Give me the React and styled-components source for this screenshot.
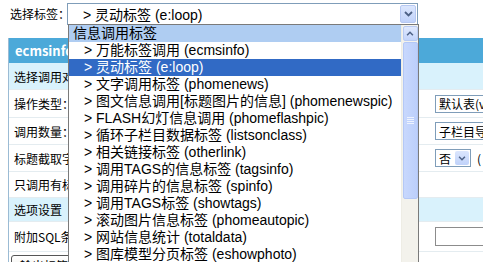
import React from "react";
import styled, { createGlobalStyle } from "styled-components";

const GlobalStyle = createGlobalStyle`
  html, body {
    margin: 0;
    padding: 0;
    background: #ffffff;
    overflow: hidden;
  }
  body {
    font-family: "Noto Sans CJK SC", "Liberation Sans", sans-serif;
    color: #000;
  }
`;

const Page = styled.div`
  position: relative;
  width: 483px;
  height: 262px;
  overflow: hidden;
`;

/* ---------- top bar ---------- */
const TopBar = styled.div`
  display: flex;
  align-items: center;
  height: 25px;
  padding-left: 10px;
  padding-top: 1px;
`;

const TopLabel = styled.span`
  font-size: 12px;
  width: 57px;
  flex-shrink: 0;
  white-space: nowrap;
`;

const SelectBox = styled.div`
  box-sizing: border-box;
  flex-shrink: 0;
  width: 351px;
  height: 22px;
  border: 1px solid #7f9db9;
  background: #fff;
  display: flex;
  align-items: center;
  justify-content: space-between;
  padding-left: 15px;
  font-family: "Liberation Sans", "Noto Sans CJK SC", sans-serif;
  font-size: 14px;
`;

const ArrowButton = styled.div`
  box-sizing: border-box;
  width: 16px;
  height: 18px;
  margin-right: 1px;
  border: 1px solid #b6c8f2;
  border-radius: 2px;
  background: linear-gradient(180deg, #dbe6fd 0%, #c0d2fa 100%);
  display: flex;
  align-items: center;
  justify-content: center;
`;

/* ---------- background panel ---------- */
const Panel = styled.div`
  margin: 12px 0 0 8px;
  border-left: 1px solid #9bbbd4;
  width: 520px;
  font-size: 12px;
`;

const PanelHeader = styled.div`
  height: 25px;
  background: #4ca9d9;
  color: #fff;
  font-weight: bold;
  font-size: 13px;
  display: flex;
  align-items: center;
  padding-left: 6px;
`;

const Row = styled.div`
  display: flex;
  align-items: center;
  height: ${(p) => p.h || 27}px;
  background: ${(p) => (p.sub ? "#d9f2fc" : "#fff")};
  border-bottom: 1px solid #e4ecf0;
  box-sizing: border-box;
`;

const Label = styled.div`
  box-sizing: border-box;
  width: 426px;
  flex-shrink: 0;
  padding-left: 5px;
  white-space: nowrap;
  overflow: hidden;
`;

const Value = styled.div`
  display: flex;
  align-items: center;
  gap: 6px;
`;

const FakeSelect = styled.div`
  box-sizing: border-box;
  height: 18px;
  width: ${(p) => p.w}px;
  border: 1px solid #7f9db9;
  display: flex;
  align-items: center;
  padding-left: 3px;
  gap: 4px;
  white-space: nowrap;
  overflow: hidden;
  background: #fff;
`;

const MiniArrow = styled.div`
  width: 14px;
  height: 14px;
  border-radius: 2px;
  background: linear-gradient(180deg, #dbe6fd 0%, #c0d2fa 100%);
  display: flex;
  align-items: center;
  justify-content: center;
`;

const TextInput = styled.div`
  box-sizing: border-box;
  height: 19px;
  width: 80px;
  border: 1px solid #8c8c8c;
  background: #fff;
`;

const OutputButton = styled.div`
  display: inline-block;
  margin: 3px 0 0 2px;
  padding: 1px 8px;
  border: 1px solid #555;
  border-radius: 3px;
  background: linear-gradient(180deg, #fff 0%, #ecebe5 100%);
  font-size: 12px;
`;

/* ---------- dropdown list (overlay) ---------- */
const Dropdown = styled.div`
  position: absolute;
  left: 68px;
  top: 24px;
  width: 351px;
  height: 250px;
  box-sizing: border-box;
  border: 1px solid #7a7a7a;
  background: #fff;
  display: flex;
  font-family: "Liberation Sans", "Noto Sans CJK SC", sans-serif;
  font-size: 14px;
`;

const Options = styled.div`
  flex: 1;
  display: flex;
  flex-direction: column;
  overflow: hidden;
`;

const Option = styled.div`
  height: 17px;
  line-height: 17px;
  flex-shrink: 0;
  white-space: nowrap;
  padding-left: ${(p) => (p.group ? 4 : 15)}px;
  background: ${(p) => (p.group ? "#afcdf2" : p.selected ? "#316ac5" : "transparent")};
  color: ${(p) => (p.selected ? "#fff" : "#000")};
`;

const Scrollbar = styled.div`
  width: 17px;
  flex-shrink: 0;
  background: #f3f2ec;
  border-left: 1px solid #eeede5;
  display: flex;
  flex-direction: column;
  align-items: center;
  padding-top: 1px;
  box-sizing: border-box;
`;

const ScrollBtn = styled.div`
  box-sizing: border-box;
  width: 15px;
  height: 15px;
  border: 1px solid #b9cbf3;
  border-radius: 2px;
  background: linear-gradient(180deg, #e0e9fe 0%, #c3d4fa 100%);
  display: flex;
  align-items: center;
  justify-content: center;
`;

const Thumb = styled.div`
  box-sizing: border-box;
  width: 15px;
  height: 157px;
  margin-top: 1px;
  border: 1px solid #b4c8f6;
  border-radius: 2px;
  background: linear-gradient(90deg, #c8d8fd 0%, #bccffb 100%);
  display: flex;
  align-items: center;
  justify-content: center;
`;

const Chevron = ({ up, size = 9 }) => (
  <svg width={size} height={size - 3} viewBox="0 0 9 6">
    <path
      d={up ? "M1 5 L4.5 1.5 L8 5" : "M1 1 L4.5 4.5 L8 1"}
      fill="none"
      stroke="#4d6185"
      strokeWidth="1.8"
    />
  </svg>
);

const Grip = () => (
  <svg width="7" height="8" viewBox="0 0 7 8">
    {[0, 2, 4, 6].map((y) => (
      <line key={y} x1="0" x2="7" y1={y + 0.5} y2={y + 0.5} stroke="#eef3fe" />
    ))}
  </svg>
);

const items = [
  { t: "信息调用标签", group: true },
  { t: "> 万能标签调用 (ecmsinfo)" },
  { t: "> 灵动标签 (e:loop)", selected: true },
  { t: "> 文字调用标签 (phomenews)" },
  { t: "> 图文信息调用[标题图片的信息] (phomenewspic)" },
  { t: "> FLASH幻灯信息调用 (phomeflashpic)" },
  { t: "> 循环子栏目数据标签 (listsonclass)" },
  { t: "> 相关链接标签 (otherlink)" },
  { t: "> 调用TAGS的信息标签 (tagsinfo)" },
  { t: "> 调用碎片的信息标签 (spinfo)" },
  { t: "> 调用TAGS标签 (showtags)" },
  { t: "> 滚动图片信息标签 (phomeautopic)" },
  { t: "> 网站信息统计 (totaldata)" },
  { t: "> 图库模型分页标签 (eshowphoto)" },
  { t: "> 推荐栏目调用标签 (hotclass)" },
];

export default function App() {
  return (
    <Page>
      <GlobalStyle />
      <TopBar>
        <TopLabel>选择标签：</TopLabel>
        <SelectBox>
          <span>&gt; 灵动标签 (e:loop)</span>
          <ArrowButton>
            <Chevron />
          </ArrowButton>
        </SelectBox>
      </TopBar>

      <Panel>
        <PanelHeader>ecmsinfo标签</PanelHeader>
        <Row sub>
          <Label>选择调用对象</Label>
        </Row>
        <Row h={28}>
          <Label>操作类型：</Label>
          <Value>
            <FakeSelect w={60}>默认表(v</FakeSelect>
          </Value>
        </Row>
        <Row>
          <Label>调用数量：</Label>
          <Value>
            <FakeSelect w={60}>子栏目导</FakeSelect>
          </Value>
        </Row>
        <Row>
          <Label>标题截取字数</Label>
          <Value>
            <FakeSelect w={36}>
              否
              <MiniArrow>
                <Chevron size={8} />
              </MiniArrow>
            </FakeSelect>
            <span>(</span>
          </Value>
        </Row>
        <Row h={26}>
          <Label>只调用有标题图片的信息</Label>
        </Row>
        <Row sub h={24}>
          <Label>选项设置</Label>
        </Row>
        <Row h={30}>
          <Label>附加SQL条件</Label>
          <Value>
            <TextInput />
          </Value>
        </Row>
        <OutputButton>输出标签</OutputButton>
      </Panel>

      <Dropdown>
        <Options>
          {items.map((it) => (
            <Option key={it.t} group={it.group} selected={it.selected}>
              {it.t}
            </Option>
          ))}
        </Options>
        <Scrollbar>
          <ScrollBtn>
            <Chevron up size={8} />
          </ScrollBtn>
          <Thumb>
            <Grip />
          </Thumb>
        </Scrollbar>
      </Dropdown>
    </Page>
  );
}
